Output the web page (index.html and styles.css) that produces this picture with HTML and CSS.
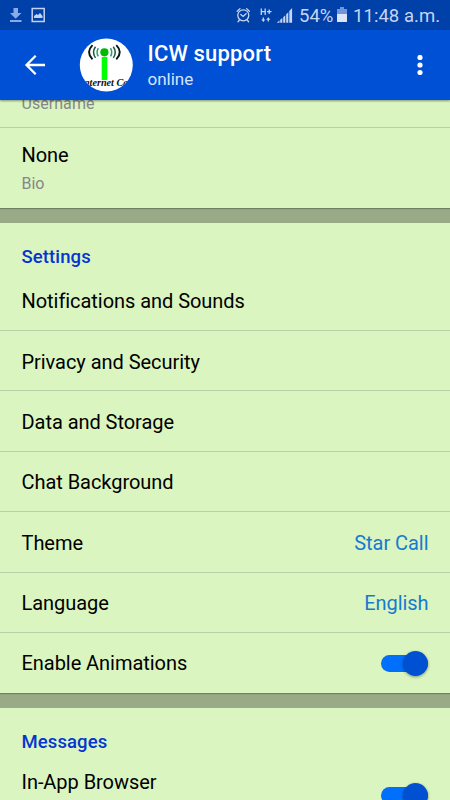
FILE: index.html
```html
<!DOCTYPE html>
<html lang="en">
<head>
<meta charset="utf-8">
<title>Settings</title>
<link rel="stylesheet" href="styles.css">
</head>
<body>
<div class="screen">
  <div class="status">
    <svg class="status-left" width="60" height="30" viewBox="0 0 60 30">
      <path fill="#8aace6" d="M13.500 8h4.500v5h3.500l-5.800 5.700L10 13h3.500zM10 20h11.500v2H10z"/>
      <path fill="none" stroke="#c3d3f2" stroke-width="1.500" d="M32.200 8.500h12v13h-12z"/>
      <path fill="#c3d3f2" d="M34 18v-2l2.500-2 1.500 1 2-2 2.500 3v2z"/>
    </svg>
    <div class="status-right">
      <svg class="status-icons" width="65" height="30" viewBox="0 0 65 30">
        <g fill="none" stroke="#c6d5f2" stroke-width="1.300" stroke-linecap="round">
          <circle cx="13.300" cy="15.300" r="5.500"/>
          <path d="M7.200 11.300l2.800-2.700M19.400 11.300l-2.800-2.700M9.500 20l-1.500 1.700M17.100 20l1.500 1.700M10.800 14.500l2.300 2 3-2.700"/>
        </g>
        <g fill="none" stroke="#c6d5f2" stroke-width="1.300">
          <path d="M31.300 8.500v6.500M35.200 8.500v6.500M31.300 11.700h3.900M37 11.700h4.500M39.200 9.500v4.400"/>
          <path d="M33.300 17.500v3M38.300 18.500v3"/>
        </g>
        <path fill="#c6d5f2" d="M31.300 19.500h4l-2 2.500zM36.300 19.800h4l-2-2.500zM47 22.500l2.500-2v2.200H47zM50.200 19.800l2.100-1.700v4.600h-2.100zM53.200 17.200l2.100-2v7.500h-2.100zM56.200 14.200l2.100-2v10.500h-2.100zM59.300 11l2.800-3v14.700h-2.800z"/>
      </svg>
      <span class="percent">54%</span>
      <svg class="battery" width="10" height="16" viewBox="0 0 10 16">
        <path fill="#6f96dc" d="M3 0h4v2h3v6H0V2h3z"/>
        <path fill="#dce5f7" d="M0 7h10v8H0z"/>
      </svg>
      <span class="time">11:48 a.m.</span>
    </div>
  </div>

  <header class="bar">
    <svg class="back" width="22" height="22" viewBox="0 0 22 22">
      <path fill="none" stroke="#fff" stroke-width="2.300" d="M21 11H2.500M11.700 1.800L2.500 11l9.200 9.200"/>
    </svg>
    <svg class="avatar" width="54" height="54" viewBox="0 0 54 54">
      <clipPath id="face"><circle cx="27.300" cy="27" r="26.500"/></clipPath>
      <circle cx="27.300" cy="27" r="26.500" fill="#fff"/>
      <g clip-path="url(#face)">
        <path fill="#0f0" d="M22.700 19h5.600v23h-5.600z"/>
        <circle cx="25.400" cy="14.300" r="4.100" fill="#00b900"/>
        <g fill="none" stroke-width="1.500">
          <path stroke="#2b9c76" d="M19.300 10.200q-2.500 4.200 0 8.200M31.500 10.200q2.500 4.200 0 8.200"/>
          <path stroke="#155b3f" d="M16.500 8.700q-4 5.600 0 11.200M34.300 8.700q4 5.600 0 11.200"/>
          <path stroke="#071b10" stroke-width="1.900" d="M13.500 7.200q-7 7.100 0 14.200M37.300 7.200q7 7.100 0 14.200"/>
        </g>
        <text class="brand" x="1" y="48" textLength="54" lengthAdjust="spacingAndGlyphs">Internet Call</text>
      </g>
    </svg>
    <div class="names">
      <div class="name">ICW support</div>
      <div class="presence">online</div>
    </div>
    <svg class="more" width="6" height="20" viewBox="0 0 6 20" fill="#fff">
      <circle cx="3" cy="2.500" r="2.600"/><circle cx="3" cy="10" r="2.600"/><circle cx="3" cy="17.500" r="2.600"/>
    </svg>
  </header>

  <main class="content">
    <section class="card profile">
      <div class="username"><span>Username</span></div>
      <div class="bio"><div class="value">None</div><div class="label">Bio</div></div>
    </section>
    <section class="card">
      <h2>Settings</h2>
      <div class="row first"><span>Notifications and Sounds</span></div>
      <div class="row"><span>Privacy and Security</span></div>
      <div class="row"><span>Data and Storage</span></div>
      <div class="row"><span>Chat Background</span></div>
      <div class="row"><span>Theme</span><span class="choice">Star Call</span></div>
      <div class="row"><span>Language</span><span class="choice">English</span></div>
      <div class="row last"><span>Enable Animations</span><span class="switch"></span></div>
    </section>
    <section class="card messages">
      <h2>Messages</h2>
      <div class="browser"><span>In-App Browser</span><span class="switch"></span></div>
    </section>
  </main>
</div>
</body>
</html>
```

FILE: styles.css
```css
* { box-sizing: border-box; }
body { margin: 0; font-family: Roboto, sans-serif; color: #000; }
.screen { width: 450px; height: 800px; overflow: hidden; display: flex; flex-direction: column; background: #99ab86; }
svg { display: block; flex: none; }

.status { height: 30px; flex: none; display: flex; justify-content: space-between; background: #0040a9; color: #c6d5f2; }
.status-right { display: flex; align-items: center; width: 220px; white-space: nowrap; }
.status-icons { margin-right: 4px; }
.percent { font-size: 18.500px; line-height: 30px; width: 34px; padding-top: 1px; }
.battery { margin-left: 4px; }
.time { font-size: 18.500px; line-height: 30px; margin-left: 6px; padding-top: 1px; letter-spacing: .05px; }

.bar { height: 70px; flex: none; display: flex; align-items: center; background: #0050d5; color: #fff; padding: 0 27px 0 24px; position: relative; z-index: 1; box-shadow: 0 1px 2px rgba(0, 0, 0, .4); }
.avatar { margin-left: 33px; }
.brand { font: italic 600 10px "Liberation Serif", serif; fill: #111; }
.names { margin-left: 14.500px; flex: 1; }
.name { font-size: 22px; line-height: 26px; font-weight: 500; letter-spacing: .17px; }
.presence { font-size: 17px; line-height: 22px; color: #d5e4ff; margin-top: 1px; }

.content { flex: 1; min-height: 0; overflow: hidden; display: flex; flex-direction: column; gap: 15px; }
.card { flex: none; background: #daf5bf; box-shadow: 0 1px 1px rgba(0, 0, 0, .25); }
.profile { height: 108px; }
.username { display: flex; align-items: flex-start; height: 28px; border-bottom: 1px solid #b8d0a4; padding-left: 21.500px; font-size: 16px; line-height: 20px; letter-spacing: .05px; color: #86878a; }
.username span { margin-top: -6px; }
.bio { padding: 14px 21.500px 0; }
.value { font-size: 20px; line-height: 26px; letter-spacing: -.05px; }
.label { font-size: 16px; line-height: 20px; margin-top: 6px; color: #86878a; }
h2 { margin: 0; padding: 22px 21.500px 0; font-size: 18.500px; line-height: 24px; font-weight: 500; letter-spacing: .1px; color: #0435d2; }
.row { height: 60.400px; padding: 2px 21.500px 0; display: flex; align-items: center; justify-content: space-between; border-bottom: 1px solid #b8d0a4; font-size: 20px; line-height: 26px; letter-spacing: -.05px; }
.first { height: 62px; }
.last { height: 60px; border-bottom: 0; padding-top: 1px; }
.choice { color: #167bd0; }
.switch { width: 47px; height: 17px; margin-right: 1px; border-radius: 9px; background: #0070fc; display: flex; align-items: center; justify-content: flex-end; }
.switch::after { content: ""; flex: none; width: 25px; height: 25px; border-radius: 50%; background: #0050d2; box-shadow: 0 1px 3px rgba(0, 0, 0, .4); }
.messages { height: 140px; }
.browser { height: 60px; padding: 0 21.500px; display: flex; justify-content: space-between; font-size: 20px; line-height: 26px; letter-spacing: -.05px; margin-top: 15px; }
.browser .switch { margin-top: 18px; }
```
